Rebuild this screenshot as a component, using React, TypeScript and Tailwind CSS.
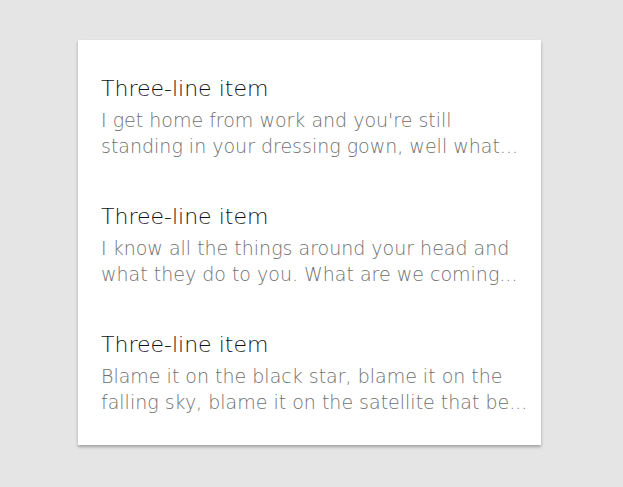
const items = [
  {
    title: "Three-line item",
    text: "I get home from work and you're still standing in your dressing gown, well what...",
  },
  {
    title: "Three-line item",
    text: "I know all the things around your head and what they do to you. What are we coming...",
  },
  {
    title: "Three-line item",
    text: "Blame it on the black star, blame it on the falling sky, blame it on the satellite that be...",
  },
];

const App = () => {
  return (
    <div
      className="w-full h-[487px] bg-[#e5e5e5] flex items-center justify-center pr-[4px] pb-[2px]"
      style={{ fontFamily: '"DejaVu Sans", "Liberation Sans", sans-serif' }}
    >
      <div className="w-[463px] bg-white pt-2 pb-[13px] shadow-[0_2px_3px_rgba(0,0,0,0.3)]">
        {items.map((item, i) => (
          <div key={i} className="h-[128px] pl-[23px] pr-[10px] pt-[27px]">
            <div className="text-[22px] leading-[28px] font-light text-[#111111]">
              {item.title}
            </div>
            <div className="mt-[4px] text-[19px] leading-[26px] font-light text-[#707070] line-clamp-2">
              {item.text}
            </div>
          </div>
        ))}
      </div>
    </div>
  );
};

export default App;
